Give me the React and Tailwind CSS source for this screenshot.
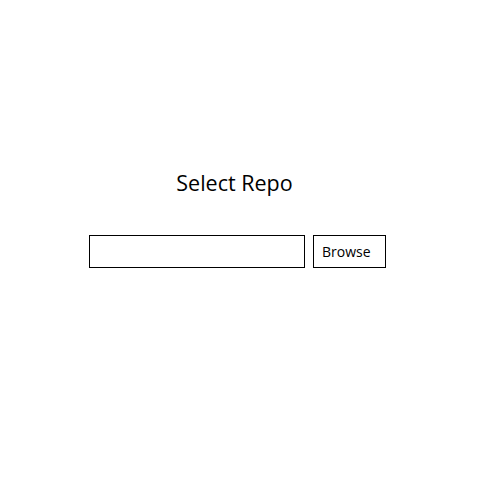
export default function App() {
  return (
    <div
      className="w-[500px] h-[500px] bg-white pt-[170px] pl-[89px]"
      style={{ fontFamily: '"Open Sans", "Noto Sans", sans-serif' }}
    >
      <div className="w-[297px] flex flex-col items-center">
        <h1 className="text-[21.5px] leading-[26px] text-black ml-[-6px]">Select Repo</h1>
        <div className="flex gap-[8px] mt-[39px]">
          <input
            type="text"
            className="w-[216px] h-[33px] border border-black bg-white outline-none px-1 text-[14px]"
          />
          <button className="w-[73px] h-[33px] border border-black bg-white text-[14px] leading-none pt-[1px] pl-[8px] text-left text-black">
            Browse
          </button>
        </div>
      </div>
    </div>
  );
}
